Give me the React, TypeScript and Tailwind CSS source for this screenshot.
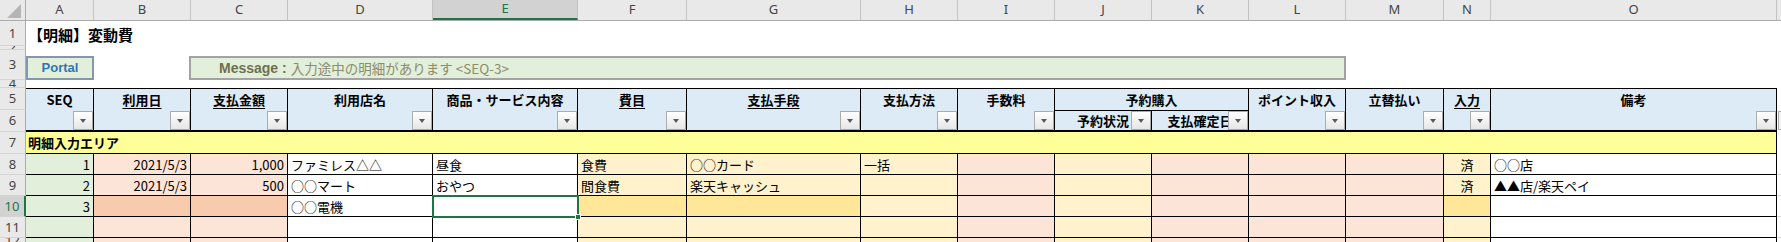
import React from "react";

type Col = {
  key: string;
  w: string;
  bg: string;
  hl?: string;
  head?: string;
  u?: boolean;
};

const cols: Col[] = [
  { key: "A", w: "w-[68px]", bg: "bg-[#e2efda]", head: "SEQ" },
  { key: "B", w: "w-[97px]", bg: "bg-[#fce4d6]", hl: "bg-[#f8cbad]", head: "利用日", u: true },
  { key: "C", w: "w-[97px]", bg: "bg-[#fce4d6]", hl: "bg-[#f8cbad]", head: "支払金額", u: true },
  { key: "D", w: "w-[145px]", bg: "bg-white", head: "利用店名" },
  { key: "E", w: "w-[145px]", bg: "bg-white", head: "商品・サービス内容" },
  { key: "F", w: "w-[109px]", bg: "bg-[#fff2cc]", hl: "bg-[#ffe699]", head: "費目", u: true },
  { key: "G", w: "w-[174px]", bg: "bg-[#fff2cc]", hl: "bg-[#ffe699]", head: "支払手段", u: true },
  { key: "H", w: "w-[97px]", bg: "bg-[#fff2cc]", head: "支払方法" },
  { key: "I", w: "w-[97px]", bg: "bg-[#fce4d6]", head: "手数料" },
  { key: "J", w: "w-[97px]", bg: "bg-[#fff2cc]" },
  { key: "K", w: "w-[97px]", bg: "bg-[#fce4d6]" },
  { key: "L", w: "w-[97px]", bg: "bg-[#fce4d6]", head: "ポイント収入" },
  { key: "M", w: "w-[98px]", bg: "bg-[#fce4d6]", head: "立替払い" },
  { key: "N", w: "w-[47px]", bg: "bg-[#fff2cc]", hl: "bg-[#ffe699]", head: "入力", u: true },
  { key: "O", w: "w-[286px]", bg: "bg-white", head: "備考" },
];

const rows: { n: string; cells: Record<string, string> }[] = [
  {
    n: "8",
    cells: { A: "1", B: "2021/5/3", C: "1,000", D: "ファミレス△△", E: "昼食", F: "食費", G: "○○カード", H: "一括", N: "済", O: "○○店" },
  },
  {
    n: "9",
    cells: { A: "2", B: "2021/5/3", C: "500", D: "○○マート", E: "おやつ", F: "間食費", G: "楽天キャッシュ", N: "済", O: "▲▲店/楽天ペイ" },
  },
  { n: "10", cells: { A: "3", D: "○○電機" } },
  { n: "11", cells: {} },
];

const alignOf = (key: string) =>
  key === "A" || key === "B" || key === "C" ? "justify-end" : key === "N" ? "justify-center" : "justify-start";

function RowHead({ label, h, active = false }: { label: string; h: string; active?: boolean }) {
  return (
    <div
      className={`${h} w-[26px] shrink-0 overflow-hidden flex items-center justify-center text-[13px] leading-none font-['Noto_Sans',sans-serif] border-b border-[#d4d4d4] ${
        active
          ? "bg-[#d2d2d2] text-[#217346] border-r-2 border-r-[#217346]"
          : "bg-[#e9e9e9] text-[#444] border-r border-r-[#ababab]"
      }`}
    >
      {label}
    </div>
  );
}

function Filter() {
  return (
    <div className="absolute bottom-0 right-0 w-[20px] h-[19px] border border-[#acacac] bg-linear-to-b from-white to-[#e6e6e6] flex items-center justify-center">
      <span className="w-0 h-0 border-x-[3px] border-t-[4px] border-x-transparent border-t-[#5a5a5a]" />
    </div>
  );
}

export default function App() {
  return (
    <div className="w-[1781px] h-[242px] overflow-hidden bg-white text-black font-['Noto_Sans_CJK_JP',sans-serif]">
      {/* column letters */}
      <div className="flex h-[21px] bg-[#e9e9e9] border-b border-[#ababab]">
        <div className="w-[26px] shrink-0 border-r border-[#ababab] flex items-end justify-end pr-[4px] pb-[2px]">
          <svg width="15" height="14" viewBox="0 0 15 14">
            <polygon points="15,0 15,14 1,14" fill="#b5b5b5" />
          </svg>
        </div>
        {cols.map((c) => (
          <div
            key={c.key}
            className={`${c.w} shrink-0 flex items-center justify-center text-[13px] font-['Noto_Sans',sans-serif] border-r border-[#c3c3c3] ${
              c.key === "E" ? "bg-[#d2d2d2] text-[#217346] border-b-2 border-b-[#217346]" : "text-[#444]"
            }`}
          >
            {c.key}
          </div>
        ))}
        <div className="flex-1" />
      </div>

      {/* row 1 */}
      <div className="flex h-[25px]">
        <RowHead label="1" h="h-[25px]" />
        <div className="flex items-center pt-[3px] pl-[2px] text-[15px] font-bold">【明細】変動費</div>
      </div>
      {/* row 2 */}
      <div className="flex h-[4px]">
        <RowHead label="2" h="h-[4px]" />
      </div>
      {/* row 3 */}
      <div className="flex h-[30px]">
        <RowHead label="3" h="h-[30px]" />
        <div className="flex items-start pt-[6px]">
          <div className="w-[68px] h-[24px] bg-[#e2efda] border-2 border-[#8497b0] flex items-center justify-center text-[13px] font-bold text-[#2e75b6] font-['Liberation_Sans',sans-serif]">
            Portal
          </div>
          <div className="ml-[95px] w-[1157px] h-[24px] bg-[#e2efda] border-2 border-[#a3a3a3] flex items-center pl-[28px]">
            <span className="text-[14px] font-bold text-[#6f6f50] font-['Liberation_Sans',sans-serif] mr-[4px]">Message :</span>
            <span className="text-[13.5px] text-[#8d8c6c]">入力途中の明細があります &lt;SEQ-3&gt;</span>
          </div>
        </div>
      </div>
      {/* row 4 */}
      <div className="flex h-[8px]">
        <RowHead label="4" h="h-[8px]" />
      </div>

      {/* rows 5-6 table header */}
      <div className="flex h-[44px]">
        <div className="flex flex-col">
          <RowHead label="5" h="h-[22px]" />
          <RowHead label="6" h="h-[22px]" />
        </div>
        {cols.map((c) => {
          if (c.key === "K") return null;
          if (c.key === "J") {
            return (
              <div key="JK" className="w-[194px] shrink-0 h-full flex flex-col bg-[#ddebf7] border-t border-b-2 border-black">
                <div className="h-[22px] border-b border-r border-black flex items-center justify-center text-[13px] font-bold">
                  予約購入
                </div>
                <div className="flex flex-1">
                  <div className="relative w-[97px] border-r border-black flex items-center justify-center text-[13px] font-bold overflow-hidden">
                    予約状況
                    <Filter />
                  </div>
                  <div className="relative w-[97px] border-r border-black flex items-center justify-center text-[13px] font-bold overflow-hidden">
                    支払確定日
                    <Filter />
                  </div>
                </div>
              </div>
            );
          }
          return (
            <div key={c.key} className={`relative ${c.w} shrink-0 h-full bg-[#ddebf7] border-t border-r border-b-2 border-black`}>
              <div className={`h-[21px] flex items-center justify-center text-[13px] font-bold ${c.u ? "underline underline-offset-[3px]" : ""}`}>
                {c.head}
              </div>
              <Filter />
            </div>
          );
        })}
        <div className="relative flex-1 h-full">
          <div className="absolute bottom-[2px] left-[1px] w-[20px] h-[19px] border border-[#acacac] bg-[#f2f2f2]" />
        </div>
      </div>

      {/* row 7 */}
      <div className="flex h-[22px]">
        <RowHead label="7" h="h-[22px]" />
        <div className="w-[1751px] shrink-0 h-full bg-[#ffff99] border-r border-b border-black flex items-center pl-[2px] text-[13px] font-bold">
          明細入力エリア
        </div>
      </div>

      {/* data rows */}
      {rows.map((r) => {
        const active = r.n === "10";
        return (
          <div key={r.n} className="flex h-[21px]">
            <RowHead label={r.n} h="h-[21px]" active={active} />
            {cols.map((c) => (
              <div
                key={c.key}
                className={`relative ${c.w} shrink-0 h-full ${active && c.hl ? c.hl : c.bg} border-r border-b border-black flex items-center ${alignOf(
                  c.key
                )} px-[3px] text-[13px] leading-none whitespace-nowrap`}
              >
                {r.cells[c.key] ?? ""}
                {active && c.key === "E" && (
                  <>
                    <div className="absolute -left-[1px] -top-[1px] -right-[2px] -bottom-[2px] border-2 border-[#217346] z-10" />
                    <div className="absolute -right-[4px] -bottom-[4px] w-[6px] h-[6px] bg-[#217346] border border-white z-20" />
                  </>
                )}
              </div>
            ))}
            <div className="flex-1 h-full border-b border-[#d9d9d9]" />
          </div>
        );
      })}

      {/* row 12 (partial) */}
      <div className="flex h-[6px]">
        <RowHead label="12" h="h-[6px]" />
        {cols.map((c) => (
          <div key={c.key} className={`${c.w} shrink-0 h-full ${c.bg} border-r border-black`} />
        ))}
      </div>
    </div>
  );
}
